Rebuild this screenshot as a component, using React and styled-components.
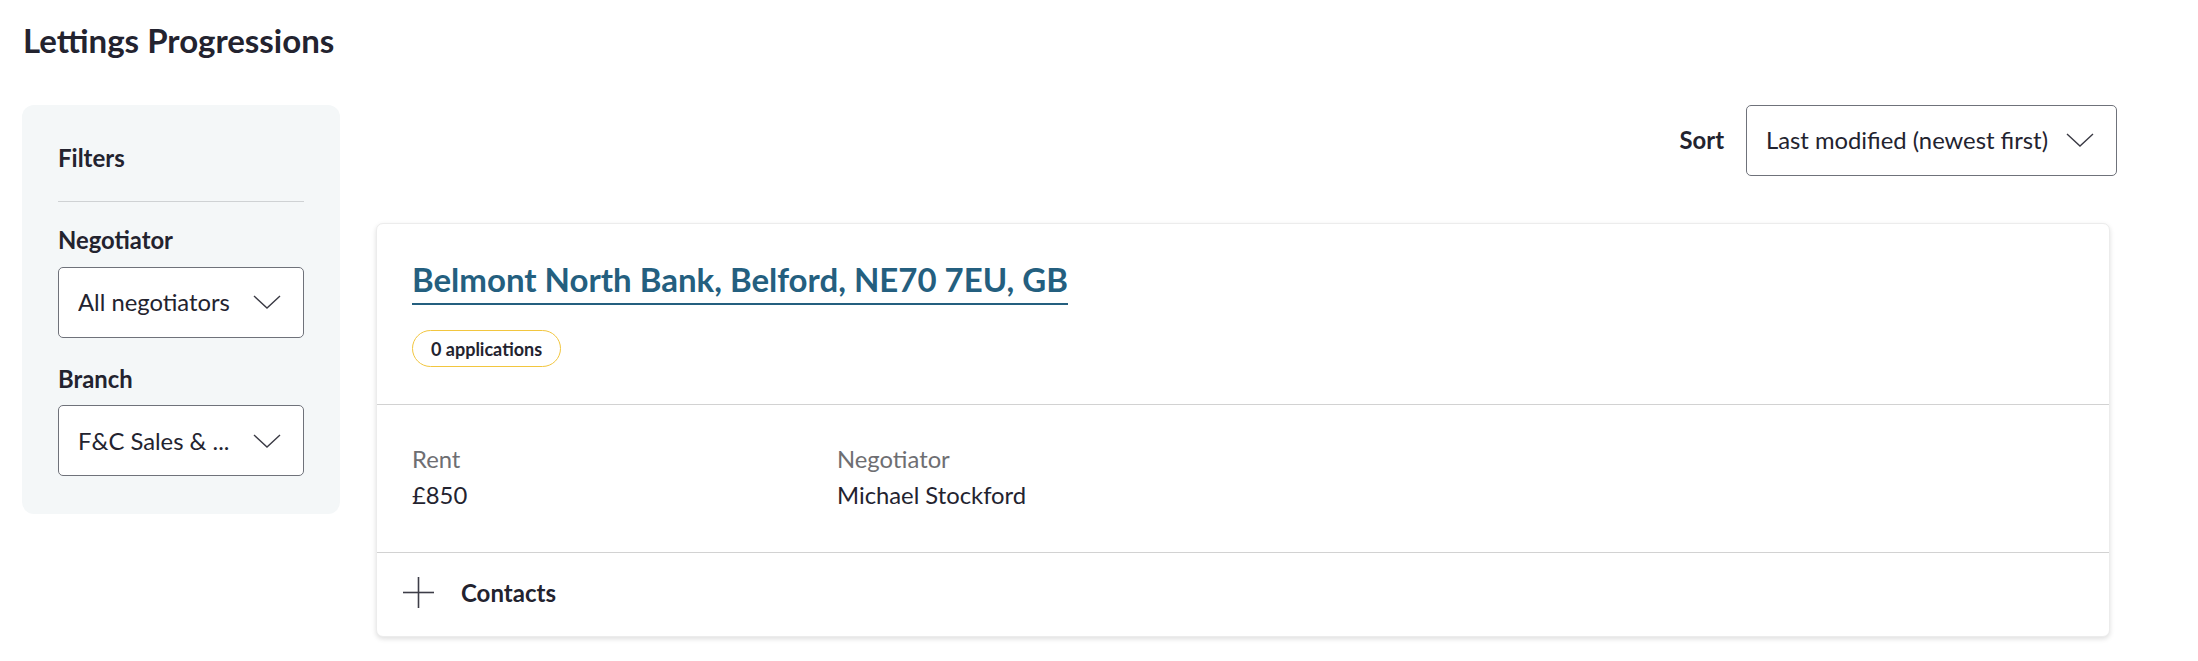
import React from "react";
import styled, { createGlobalStyle } from "styled-components";

const GlobalStyle = createGlobalStyle`
  html, body {
    margin: 0;
    padding: 0;
    background: #ffffff;
  }
  body {
    font-family: Lato, "Open Sans", "Liberation Sans", sans-serif;
    color: #23232f;
  }
  * {
    box-sizing: border-box;
  }
`;

const Page = styled.div`
  padding: 21px 81px 24px 22px;
`;

const PageTitle = styled.h1`
  margin: 0 0 44px 1px;
  font-size: 33px;
  line-height: 1.2;
  font-weight: 700;
  color: #23232f;
`;

const Layout = styled.div`
  display: flex;
  align-items: flex-start;
  gap: 36px;
`;

const FilterPanel = styled.aside`
  flex: 0 0 318px;
  width: 318px;
  min-width: 0;
  background: #f4f7f8;
  border-radius: 12px;
  padding: 39px 36px 38px;
  display: flex;
  flex-direction: column;
`;

const PanelTitle = styled.h2`
  margin: 0;
  font-size: 24px;
  line-height: 1.2;
  font-weight: 700;
`;

const Divider = styled.hr`
  margin: 29px 0 0;
  border: 0;
  border-top: 1px solid #cfd2d4;
`;

const FieldGroup = styled.div`
  display: flex;
  flex-direction: column;
  gap: 12px;
  margin-top: ${(p) => (p.$first ? "24px" : "27px")};
`;

const FieldLabel = styled.label`
  font-size: 23.8px;
  line-height: 1.2;
  font-weight: 700;
`;

const SelectBox = styled.div`
  display: flex;
  align-items: center;
  gap: 18px;
  height: 71px;
  width: ${(p) => (p.$auto ? "auto" : "100%")};
  padding: 0 22px 0 19px;
  background: #ffffff;
  border: 1px solid #6f727a;
  border-radius: 5px;
  cursor: pointer;
`;

const SelectValue = styled.span`
  flex: ${(p) => (p.$auto ? "0 0 auto" : "1 1 auto")};
  min-width: 0;
  font-size: 23.8px;
  line-height: 1.2;
  white-space: nowrap;
  overflow: hidden;
  text-overflow: ellipsis;
  color: #23232f;
`;

const ChevronIcon = styled.svg`
  flex: 0 0 auto;
  width: 28px;
  height: 14px;
`;

const Chevron = () => (
  <ChevronIcon viewBox="0 0 28 14" fill="none">
    <polyline points="1,1 14,13 27,1" stroke="#3a3a44" strokeWidth="1.4" />
  </ChevronIcon>
);

const Main = styled.main`
  flex: 1 1 auto;
  min-width: 0;
  display: flex;
  flex-direction: column;
  gap: 47px;
`;

const SortBar = styled.div`
  display: flex;
  justify-content: flex-end;
  align-items: center;
  gap: 22px;
`;

const SortLabel = styled.span`
  font-size: 23.8px;
  font-weight: 700;
`;

const Card = styled.article`
  margin-right: 7px;
  background: #ffffff;
  border: 1px solid #ececec;
  border-radius: 7px;
  box-shadow: 0 2px 5px rgba(0, 0, 0, 0.13);
`;

const CardHeader = styled.header`
  display: flex;
  flex-direction: column;
  align-items: flex-start;
  gap: 25px;
  padding: 36px 35px 37px;
  border-bottom: 1px solid #d2d2d2;
`;

const AddressLink = styled.a`
  display: inline-block;
  font-size: 33px;
  line-height: 1.2;
  font-weight: 700;
  color: #245f7f;
  text-decoration: none;
  padding-bottom: 4px;
  border-bottom: 2px solid #245f7f;
`;

const Badge = styled.span`
  display: inline-flex;
  align-items: center;
  height: 37px;
  padding: 0 18px;
  border: 1.4px solid #f2c63f;
  border-radius: 19px;
  font-size: 18px;
  font-weight: 700;
  color: #23232f;
`;

const CardDetails = styled.div`
  display: grid;
  grid-template-columns: 425px 1fr;
  padding: 36px 35px 39px;
  border-bottom: 1px solid #d2d2d2;
`;

const Detail = styled.div`
  display: flex;
  flex-direction: column;
`;

const DetailLabel = styled.span`
  font-size: 23.8px;
  line-height: 36px;
  color: #6e6e72;
`;

const DetailValue = styled.span`
  font-size: 23.8px;
  line-height: 36px;
  color: #23232f;
`;

const CardFooter = styled.button`
  display: flex;
  align-items: center;
  gap: 27px;
  width: 100%;
  height: 83px;
  padding: 0 0 4px 26px;
  background: none;
  border: 0;
  font-family: inherit;
  cursor: pointer;
`;

const FooterTitle = styled.span`
  font-size: 24px;
  font-weight: 700;
  color: #23232f;
`;

const PlusIcon = styled.svg`
  width: 31px;
  height: 31px;
`;

const Plus = () => (
  <PlusIcon viewBox="0 0 31 31" fill="none">
    <line x1="15.5" y1="0" x2="15.5" y2="31" stroke="#3d3d48" strokeWidth="1.6" />
    <line x1="0" y1="15.5" x2="31" y2="15.5" stroke="#3d3d48" strokeWidth="1.6" />
  </PlusIcon>
);

const Select = ({ value, auto }) => (
  <SelectBox $auto={auto}>
    <SelectValue $auto={auto}>{value}</SelectValue>
    <Chevron />
  </SelectBox>
);

const details = [
  { label: "Rent", value: "£850" },
  { label: "Negotiator", value: "Michael Stockford" },
];

export default function App() {
  return (
    <>
      <GlobalStyle />
      <Page>
        <PageTitle>Lettings Progressions</PageTitle>
        <Layout>
          <FilterPanel>
            <PanelTitle>Filters</PanelTitle>
            <Divider />
            <FieldGroup $first>
              <FieldLabel>Negotiator</FieldLabel>
              <Select value="All negotiators" />
            </FieldGroup>
            <FieldGroup>
              <FieldLabel>Branch</FieldLabel>
              <Select value="F&C Sales & ..." />
            </FieldGroup>
          </FilterPanel>
          <Main>
            <SortBar>
              <SortLabel>Sort</SortLabel>
              <Select value="Last modified (newest first)" auto />
            </SortBar>
            <Card>
              <CardHeader>
                <AddressLink href="#">Belmont North Bank, Belford, NE70 7EU, GB</AddressLink>
                <Badge>0 applications</Badge>
              </CardHeader>
              <CardDetails>
                {details.map((d) => (
                  <Detail key={d.label}>
                    <DetailLabel>{d.label}</DetailLabel>
                    <DetailValue>{d.value}</DetailValue>
                  </Detail>
                ))}
              </CardDetails>
              <CardFooter>
                <Plus />
                <FooterTitle>Contacts</FooterTitle>
              </CardFooter>
            </Card>
          </Main>
        </Layout>
      </Page>
    </>
  );
}
